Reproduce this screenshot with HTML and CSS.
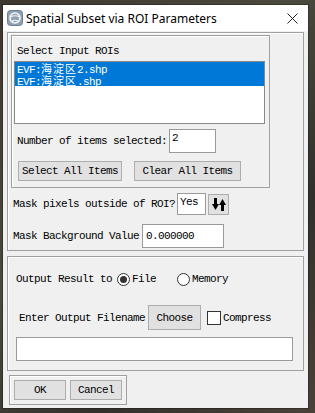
FILE: index.html
```html
<!DOCTYPE html>
<html lang="en">
<head>
    <meta charset="UTF-8">
    <title>Spatial Subset via ROI Parameters</title>
    <link rel="stylesheet" href="styles.css">
</head>
<body>

<div class="window">
    <div class="titlebar">
        <svg class="app-icon" width="16" height="16" viewBox="0 0 16 16">
            <rect x="0.5" y="0.5" width="15" height="15" rx="3" fill="#8fa0b3" stroke="#6f7f91"/>
            <circle cx="8" cy="8" r="5" fill="none" stroke="#f4f6f8" stroke-width="1.6"/>
            <path d="M3.5 7 Q8 4.5 12.5 7" fill="none" stroke="#f4f6f8" stroke-width="1.2"/>
            <path d="M5 11.5 Q8 9 11 11.5" fill="none" stroke="#f4f6f8" stroke-width="1.2"/>
        </svg>
        <span class="title">Spatial Subset via ROI Parameters</span>
        <svg class="close" width="11" height="11" viewBox="0 0 11 11">
            <path d="M0.5 0.5 L10.5 10.5 M10.5 0.5 L0.5 10.5" stroke="#222" stroke-width="1"/>
        </svg>
    </div>

    <div class="frame frame-input">
        <div class="group">
            <div class="label">Select Input ROIs</div>
            <div class="listbox">
                <div class="item selected">EVF:<span class="cjk">海淀区</span>2.shp</div>
                <div class="item selected">EVF:<span class="cjk">海淀区</span>.shp</div>
            </div>
            <div class="row count-row">
                <span class="text">Number of items selected:</span>
                <div class="field count-field">2</div>
            </div>
            <div class="row btn-row">
                <button class="btn select-btn">Select All Items</button>
                <button class="btn clear-btn">Clear All Items</button>
            </div>
        </div>
        <div class="row mask-row">
            <span class="text">Mask pixels outside of ROI?</span>
            <div class="field yes-field">Yes</div>
            <button class="btn toggle-btn">
                <svg width="14" height="13" viewBox="0 0 14 13">
                    <rect x="2" y="0" width="3" height="7" fill="#000"/>
                    <polygon points="0,6 7,6 3.5,12" fill="#000"/>
                    <rect x="9" y="6" width="3" height="7" fill="#000"/>
                    <polygon points="7,7 14,7 10.5,1" fill="#000"/>
                </svg>
            </button>
        </div>
        <div class="row bg-row">
            <span class="text">Mask Background Value</span>
            <div class="field bg-field">0.000000</div>
        </div>
    </div>

    <div class="frame frame-output">
        <div class="row output-row">
            <span class="text">Output Result to</span>
            <span class="radio checked"></span>
            <span class="text opt">File</span>
            <span class="radio memory-radio"></span>
            <span class="text opt">Memory</span>
        </div>
        <div class="row file-row">
            <span class="text">Enter Output Filename</span>
            <button class="btn choose-btn">Choose</button>
            <span class="checkbox"></span>
            <span class="text opt">Compress</span>
        </div>
        <div class="field filename-field"></div>
    </div>

    <div class="frame frame-actions">
        <button class="btn action-btn">OK</button>
        <button class="btn action-btn">Cancel</button>
    </div>
</div>

</body>
</html>
```

FILE: styles.css
```css
body {
    margin: 0;
    padding: 0;
    width: 315px;
    height: 413px;
    overflow: hidden;
    background: linear-gradient(135deg, #3e3630 0%, #4b4a3e 40%, #33302c 70%, #4a4239 100%);
}
.window {
    margin: 5px 0 0 3px;
    width: 305px;
    height: 403px;
    background-color: #f0f0f0;
    box-shadow: 0 0 0 1px rgba(0, 0, 0, 0.25);
    font-family: "Liberation Mono", "Noto Sans CJK SC", monospace;
    font-size: 11px;
    letter-spacing: -0.6px;
    color: #000;
}
.titlebar {
    height: 26px;
    background-color: #ffffff;
    display: flex;
    align-items: center;
    padding-left: 4px;
}
.app-icon {
    flex: none;
}
.title {
    font-family: "Noto Sans", sans-serif;
    font-size: 12px;
    letter-spacing: 0;
    margin-left: 3px;
    flex: 1;
    color: #000;
}
.close {
    margin-right: 10px;
    flex: none;
}
.frame {
    border: 1px solid #a0a0a0;
    box-shadow: inset 1px 1px 0 #ffffff;
}
.frame-input {
    margin: 1px 4px 0 4px;
    padding: 2px 0 2px 3px;
}
.group {
    width: 253px;
    border: 1px solid #a0a0a0;
    box-shadow: inset 1px 1px 0 #ffffff;
    padding: 8px 2px 6px 2px;
}
.label {
    height: 14px;
    line-height: 14px;
    padding-left: 3px;
}
.listbox {
    margin-top: 3px;
    width: 249px;
    height: 61px;
    background-color: #ffffff;
    border: 1px solid #8a8a8a;
}
.item {
    height: 12px;
    line-height: 12px;
    padding-left: 2px;
    white-space: nowrap;
}
.item.selected {
    background-color: #0078d7;
    color: #ffffff;
}
.cjk {
    font-family: "Noto Sans CJK SC", sans-serif;
    font-size: 11px;
    letter-spacing: 1px;
    line-height: 12px;
}
.row {
    display: flex;
    align-items: center;
    white-space: nowrap;
}
.text {
    line-height: 14px;
}
.field {
    background-color: #ffffff;
    border: 1px solid #9a9a9a;
    box-sizing: border-box;
}
.btn {
    font-family: "Liberation Mono", monospace;
    font-size: 11px;
    letter-spacing: -0.6px;
    color: #000;
    background-color: #e1e1e1;
    border: 1px solid #adadad;
    box-sizing: border-box;
    padding: 0;
    margin: 0;
}
.count-row {
    margin-top: 5px;
    padding-left: 3px;
}
.count-field {
    margin-left: 2px;
    width: 47px;
    height: 24px;
    padding: 1px 0 0 2px;
    line-height: 14px;
}
.btn-row {
    margin-top: 8px;
    padding-left: 4px;
}
.select-btn {
    width: 104px;
    height: 20px;
}
.clear-btn {
    margin-left: 12px;
    width: 107px;
    height: 20px;
}
.mask-row {
    margin-top: 5px;
    padding-left: 2px;
}
.yes-field {
    margin-left: 2px;
    width: 29px;
    height: 22px;
    padding: 1px 0 0 2px;
    line-height: 14px;
}
.toggle-btn {
    margin-left: 2px;
    width: 21px;
    height: 21px;
    display: flex;
    align-items: center;
    justify-content: center;
}
.bg-row {
    margin-top: 9px;
    padding-left: 2px;
}
.bg-field {
    margin-left: 3px;
    width: 82px;
    height: 24px;
    padding-left: 3px;
    line-height: 22px;
}
.frame-output {
    margin: 5px 4px 0 4px;
    padding: 14px 0 9px 0;
}
.output-row {
    height: 16px;
    padding-left: 8px;
}
.radio {
    width: 13px;
    height: 13px;
    border: 1px solid #333;
    border-radius: 50%;
    background-color: #ffffff;
    box-sizing: border-box;
    margin-left: 5px;
    margin-right: 2px;
    position: relative;
}
.radio.checked::after {
    content: "";
    position: absolute;
    left: 2px;
    top: 2px;
    width: 7px;
    height: 7px;
    border-radius: 50%;
    background-color: #333;
}
.memory-radio {
    margin-left: 21px;
}
.file-row {
    margin-top: 18px;
    padding-left: 11px;
}
.choose-btn {
    margin-left: 3px;
    width: 53px;
    height: 25px;
}
.checkbox {
    margin-left: 6px;
    margin-right: 2px;
    width: 14px;
    height: 14px;
    border: 1px solid #333;
    background-color: #ffffff;
    box-sizing: border-box;
}
.filename-field {
    margin: 7px 0 0 8px;
    width: 277px;
    height: 24px;
}
.frame-actions {
    margin: 4px 0 0 6px;
    width: 118px;
    box-sizing: border-box;
    padding: 4px;
    display: flex;
    gap: 4px;
}
.action-btn {
    width: 52px;
    height: 20px;
}
```
